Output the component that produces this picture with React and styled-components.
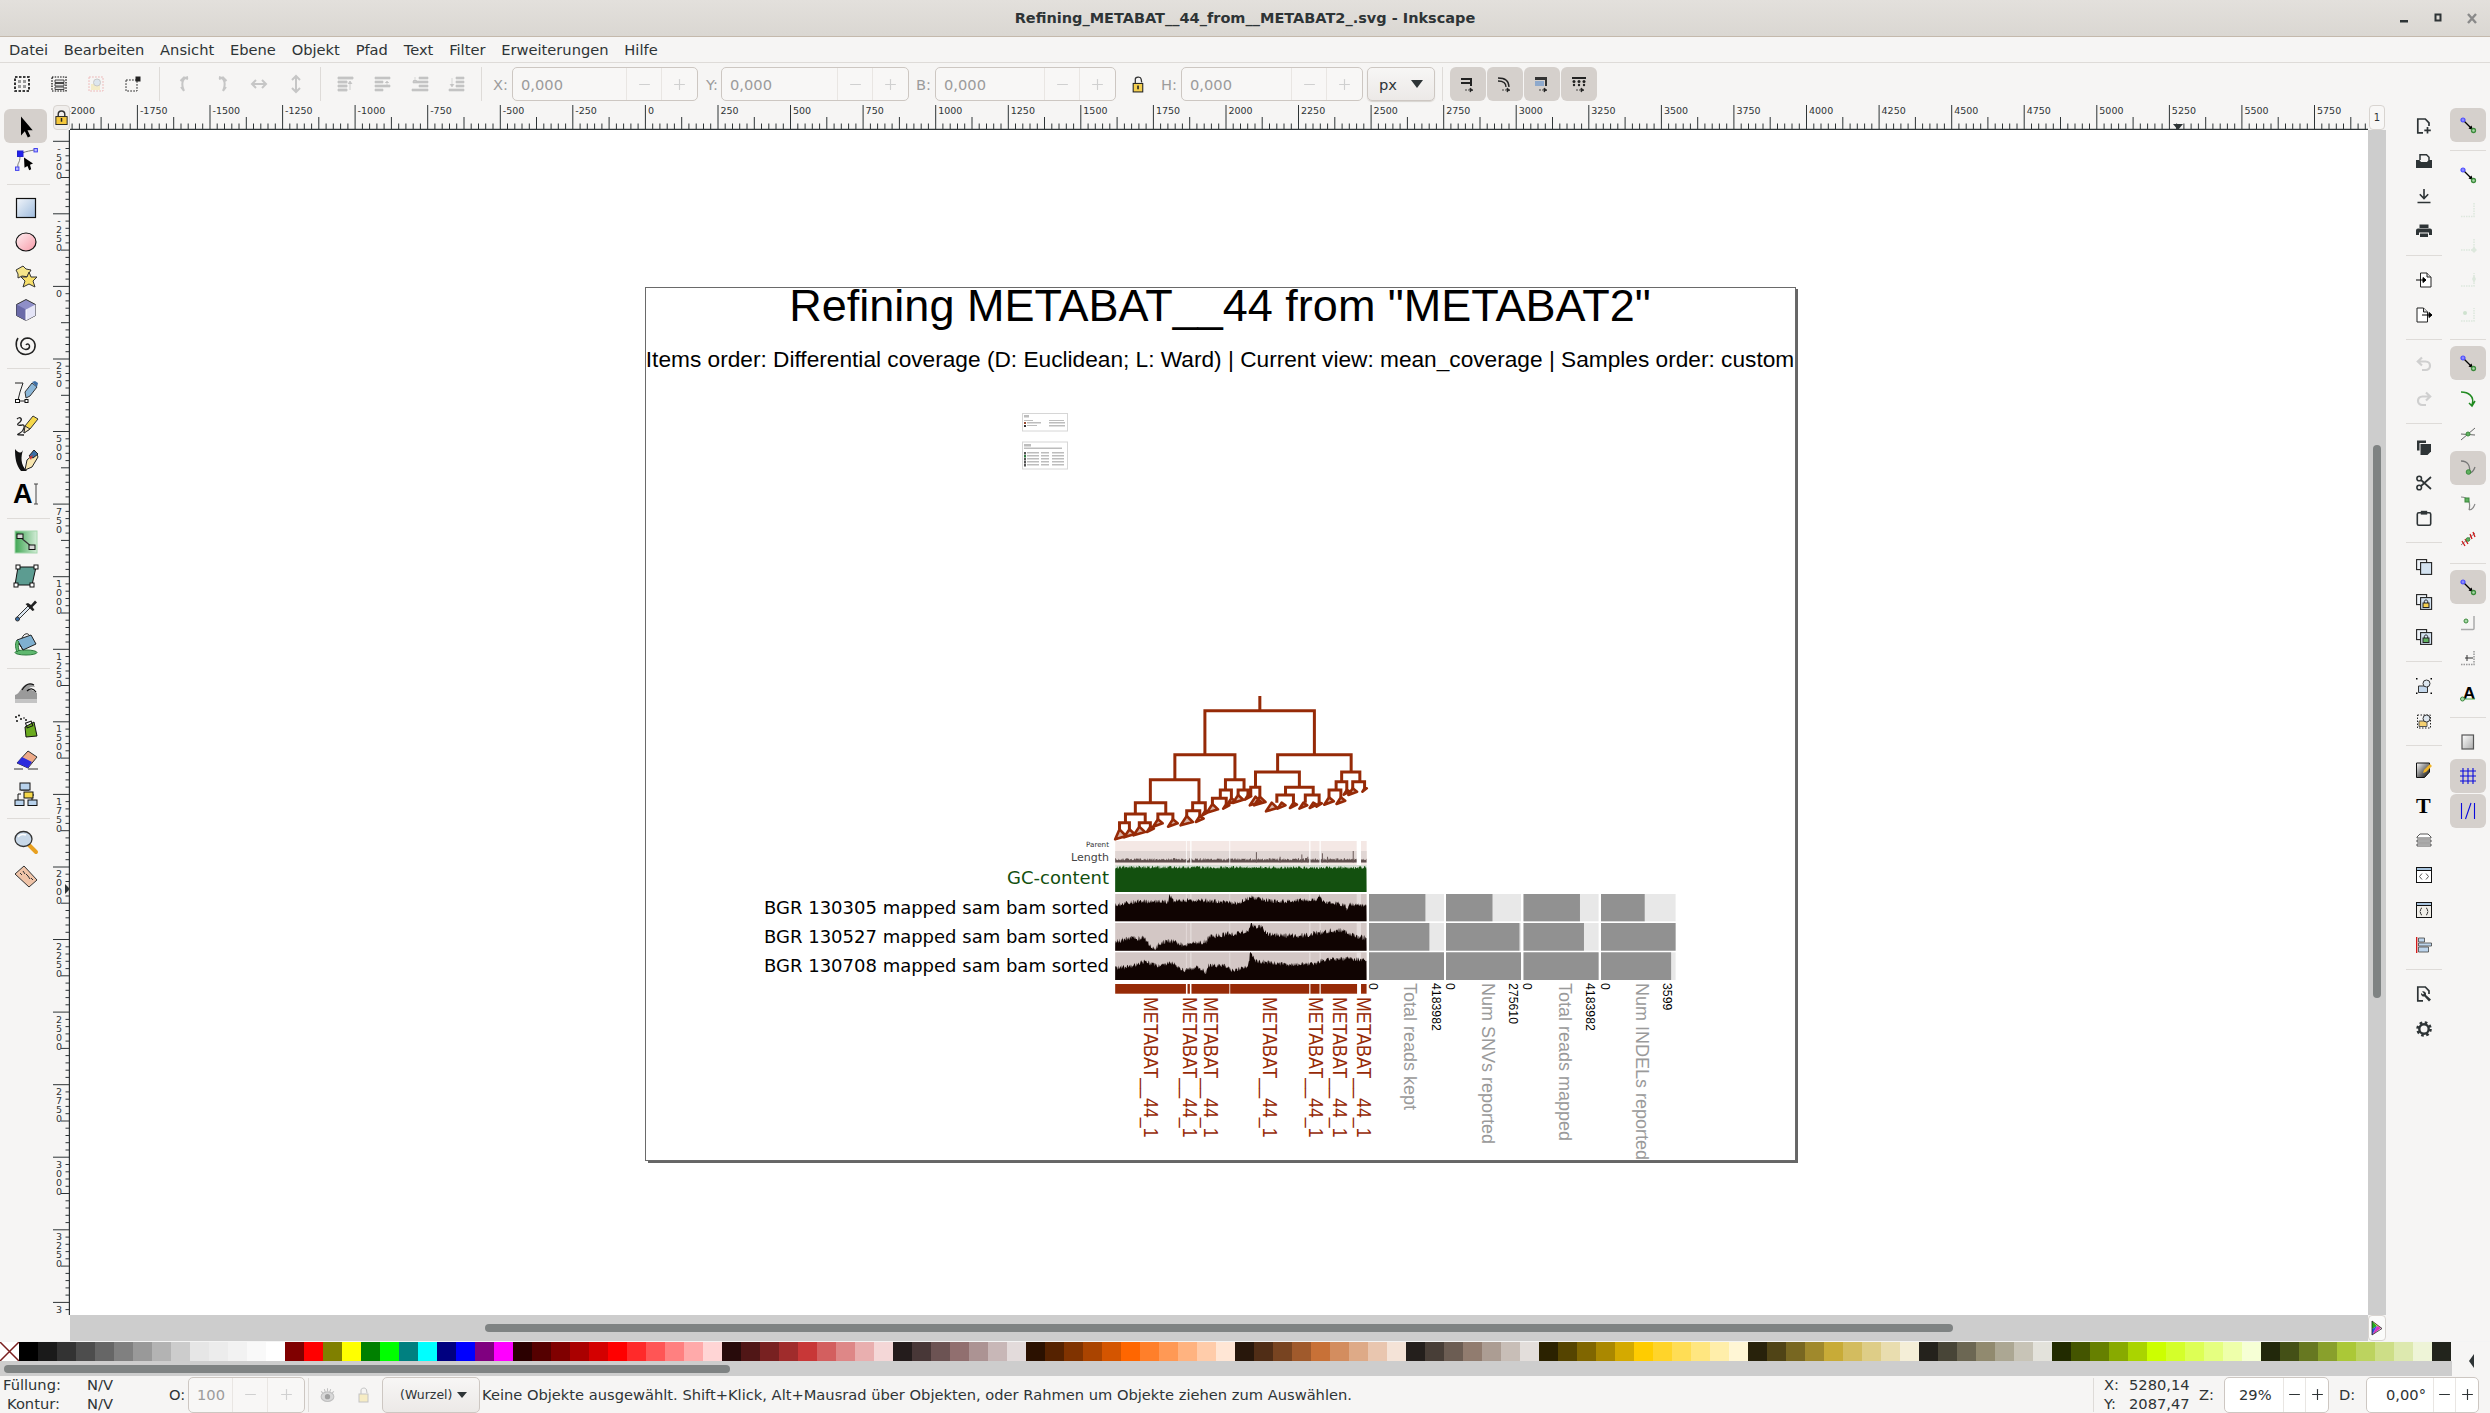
import React from 'react';
import styled, { createGlobalStyle } from 'styled-components';
import { Minus, Plus } from 'lucide-react';

const UI_FONT = '"DejaVu Sans", sans-serif';
const BG = '#f6f5f4';
const DARK = '#2e3436';
const RUST = '#962a07';
const STEP = 72.57;
const ZERO_X = 645.4;
const ZERO_Y = 286.4;

const GlobalStyle = createGlobalStyle`
  html, body { margin: 0; padding: 0; background: ${BG}; }
  body { font-family: ${UI_FONT}; color: ${DARK}; overflow: hidden; }
`;

const Window = styled.div`
  width: 2490px;
  height: 1413px;
  display: flex;
  flex-direction: column;
  background: ${BG};
  font-size: 14.67px;
`;

const TitleBar = styled.header`
  height: 36px;
  flex: none;
  position: relative;
  display: flex;
  align-items: center;
  justify-content: center;
  background: linear-gradient(#e3e0dc, #dad7d2);
  border-bottom: 1px solid #c4b9ac;
  font-weight: bold;
  font-size: 14.5px;
`;

const WinButtons = styled.div`
  position: absolute;
  right: 10px;
  top: 0;
  height: 36px;
`;

const MenuBar = styled.nav`
  height: 25px;
  flex: none;
  display: flex;
  align-items: center;
  padding-left: 1px;
  border-bottom: 1px solid #dedbd8;
`;

const MenuItem = styled.span`
  padding: 0 7.9px;
  white-space: nowrap;
`;

const Toolbar = styled.div`
  height: 42px;
  flex: none;
  display: flex;
  align-items: center;
  padding: 0 0 0 3px;
`;

const Slot = styled.div`
  width: ${p => p.$w || 37}px;
  height: 34px;
  flex: none;
  display: flex;
  align-items: center;
  justify-content: center;
  margin-right: ${p => p.$mr || 0}px;
  ${p => p.$on && `background: #d5d0cc; border-radius: 6px;`}
`;

const VRule = styled.div`
  width: 1px;
  height: 34px;
  flex: none;
  background: #dedbd8;
  margin: 0 ${p => p.$r ?? 6}px 0 ${p => p.$l ?? 6}px;
`;

const FieldLabel = styled.span`
  flex: none;
  width: ${p => p.$w}px;
  margin-left: ${p => p.$ml || 0}px;
  color: ${p => (p.$off ? '#9c9c9c' : DARK)};
  white-space: nowrap;
`;

const Spin = styled.div`
  display: flex;
  flex: none;
  width: ${p => p.$w}px;
  height: ${p => p.$h || 34}px;
  box-sizing: border-box;
  border: 1px solid #cdc7c2;
  border-radius: 5px;
  background: ${p => (p.$off ? '#f8f7f6' : '#ffffff')};
  color: ${p => (p.$off ? '#9c9c9c' : DARK)};
  margin-right: ${p => p.$mr || 0}px;
`;

const SpinValue = styled.div`
  flex: 1;
  display: flex;
  align-items: center;
  padding-left: ${p => p.$pad}px;
`;

const SpinStep = styled.div`
  flex: none;
  width: ${p => p.$w}px;
  display: flex;
  align-items: center;
  justify-content: center;
  border-left: 1px solid #e9e6e3;
  color: ${p => (p.$off ? '#d0d0d0' : DARK)};
`;

const UnitButton = styled.div`
  width: 68px;
  height: 34px;
  flex: none;
  box-sizing: border-box;
  border: 1px solid #cdc7c2;
  border-radius: 5px;
  background: linear-gradient(#f7f6f5, #ece9e7);
  box-shadow: 0 1px 1px #d8d4d0;
  display: flex;
  align-items: center;
  justify-content: space-between;
  padding: 0 11px;
  margin: 0 7px 0 4px;
`;

const Caret = styled.span`
  width: 0;
  height: 0;
  border-left: 6px solid transparent;
  border-right: 6px solid transparent;
  border-top: 8px solid ${DARK};
`;

const SmallCaret = styled(Caret)`
  border-left-width: 5px;
  border-right-width: 5px;
  border-top-width: 6px;
`;

const Workspace = styled.div`
  flex: 1;
  display: flex;
  min-height: 0;
`;

const ToolColumn = styled.aside`
  width: 52px;
  flex: none;
  padding: 4px 0 0 4px;
  box-sizing: border-box;
`;

const ToolButton = styled.div`
  width: 43px;
  height: 34px;
  display: flex;
  align-items: center;
  justify-content: center;
  ${p => p.$on && `background: #d5d0cc; border-radius: 6px;`}
`;

const ToolGap = styled.div`
  height: 14px;
  display: flex;
  align-items: center;
  &::before {
    content: '';
    width: 43px;
    height: 1px;
    margin: 0 auto;
    background: #dedbd8;
  }
`;

const CanvasGrid = styled.div`
  width: 2334px;
  flex: none;
  display: grid;
  grid-template-columns: 18px 2298px 18px;
  grid-template-rows: 25px 1185px 26px;
`;

const RulerLock = styled.div`
  margin: 0 0 0 1px;
  border: 1px solid #d8d4d0;
  border-radius: 4px;
  background: #f0eeec;
  box-sizing: border-box;
  display: flex;
  align-items: center;
  justify-content: center;
  z-index: 2;
`;

const PageCounter = styled(RulerLock)`
  margin: 0 1px;
  background: #f8f7f6;
  font-size: 10px;
  &::after {
    content: '1';
  }
`;

const RulerSvg = styled.svg`
  display: block;
`;

const RulerLabel = styled.text`
  font-family: ${UI_FONT};
  font-size: 9.5px;
  fill: ${DARK};
`;

const Canvas = styled.main`
  background: #ffffff;
  overflow: hidden;
`;

const VScroll = styled.div`
  background: #cdcdcd;
  padding: 315px 0 0 5px;
`;

const VThumb = styled.div`
  width: 8px;
  height: 553px;
  border-radius: 4px;
  background: #7f8383;
`;

const HScroll = styled.div`
  background: #cdcdcd;
  padding: 9px 0 0 415px;
`;

const HThumb = styled.div`
  width: ${p => p.$w}px;
  height: 8px;
  border-radius: 4px;
  background: #7f8383;
`;

const WheelButton = styled.div`
  border: 1px solid #d8d4d0;
  border-radius: 4px;
  background: #fbfbfa;
  box-sizing: border-box;
  display: flex;
  align-items: center;
  justify-content: center;
`;

const SideColumns = styled.div`
  display: flex;
  flex: 1;
  padding: 3px 0 0 16px;
  box-sizing: border-box;
`;

const SideColumn = styled.div`
  width: 44px;
  flex: none;
  display: flex;
  flex-direction: column;
  align-items: center;
`;

const SideButton = styled.div`
  width: 36px;
  height: 35px;
  display: flex;
  align-items: center;
  justify-content: center;
  ${p => p.$on && `background: #d5d0cc; border-radius: 6px; height: 34px; margin-bottom: 1px;`}
`;

const SideGap = styled.div`
  height: 14px;
  width: 36px;
  display: flex;
  align-items: center;
  &::before {
    content: '';
    width: 100%;
    height: 1px;
    background: #dedbd8;
  }
`;

const PaletteArea = styled.section`
  flex: none;
  height: 34px;
  display: flex;
  border-top: 1px solid #f4f4f4;
`;

const PaletteBody = styled.div`
  width: 2452px;
  flex: none;
  display: flex;
  flex-direction: column;
`;

const Swatches = styled.div`
  height: 19px;
  display: flex;
`;

const Swatch = styled.div`
  flex: 1;
  background: ${p => p.$c};
`;

const NoColor = styled.svg`
  flex: 1;
  display: block;
  background: #ffffff;
`;

const PaletteScroll = styled.div`
  flex: 1;
  background: #cdcdcd;
  padding: 4px 0 0 4px;
`;

const PaletteArrow = styled.div`
  flex: 1;
  display: flex;
  justify-content: center;
  padding-top: 12px;
  &::before {
    content: '';
    width: 0;
    height: 0;
    border-top: 7px solid transparent;
    border-bottom: 7px solid transparent;
    border-right: 5px solid ${DARK};
  }
`;

const StatusBar = styled.footer`
  height: 37px;
  flex: none;
  display: flex;
  align-items: center;
  white-space: nowrap;
`;

const StyleReadout = styled.div`
  width: 169px;
  flex: none;
  display: grid;
  grid-template-columns: 84px 1fr;
  grid-auto-rows: 19px;
  padding: 1px 0 0 3px;
  box-sizing: border-box;
`;

const Indented = styled.span`
  padding-left: 4px;
`;

const LayerButton = styled.div`
  width: 98px;
  height: 36px;
  flex: none;
  box-sizing: border-box;
  border: 1px solid #cdc7c2;
  border-radius: 5px;
  background: linear-gradient(#f7f6f5, #ece9e7);
  display: flex;
  align-items: center;
  gap: 5px;
  padding-left: 17px;
  font-size: 12.5px;
`;

const StatusMessage = styled.span`
  margin-left: 2px;
  flex: none;
  width: 1611px;
`;

const Coords = styled.div`
  width: 105px;
  flex: none;
  display: grid;
  grid-template-columns: 25px 1fr;
  grid-auto-rows: 19px;
  padding: 1px 0 0 10px;
  box-sizing: border-box;
`;

const StatusIconSlot = styled.div`
  width: ${p => p.$w}px;
  flex: none;
  display: flex;
  justify-content: center;
`;

const ChartText = styled.text`
  font-family: ${p => (p.$ui ? UI_FONT : '"Liberation Sans", sans-serif')};
  font-size: ${p => p.$size}px;
  fill: ${p => p.$fill || '#000000'};
`;

const IconText = styled.text`
  font-family: ${p => (p.$serif ? '"Liberation Serif", serif' : '"Liberation Sans", sans-serif')};
  font-weight: bold;
  font-size: ${p => p.$size}px;
  fill: #000000;
`;

// ---- icons, all on a 24 or a 16 grid ----
const ln = (id, a, b) => (
  <linearGradient id={id} x1="0" y1="0" x2="1" y2="1">
    <stop offset="0" stopColor={a} />
    <stop offset="1" stopColor={b} />
  </linearGradient>
);

const dotL = '#dde8dd';
const GREEN = '#3c8a3c';
const SNAP_BLUE = '#4a4aff';

const SnapBase = () => (
  <>
    <path d="M4 4l8 8" stroke="#000" strokeWidth="1.2" />
    <path d="M13 13l-4.5-1.5 3-3z" fill="#000" />
    <circle cx="3" cy="3" r="2" fill="#8888ff" stroke={SNAP_BLUE} strokeWidth="1.2" />
    <circle cx="13.5" cy="13.5" r="2" fill="#a8d8a8" stroke={GREEN} strokeWidth="1.3" />
  </>
);

const Dup = ({ children }) => (
  <>
    <rect x="0.6" y="0.6" width="10" height="10" fill="#eef3f8" stroke="#222" strokeWidth="1.1" />
    <rect x="4.6" y="3.6" width="11" height="11.8" fill="#d3e2f0" stroke="#222" strokeWidth="1.1" />
    {children}
  </>
);

const ICONS = {
  select: [24, <path d="M7 2.5v19l3.8-4.2 3 6.2 2.6-1.3-2.9-5.9h5.2z" fill="#000" />],
  node: [24, <>
    <path d="M6 8C6 16 3 14 4 20M8 5C13 3 16 3 20 2" fill="none" stroke="#777" strokeWidth="1" />
    <rect x="3.5" y="3" width="5.5" height="5.5" fill="#2222ee" stroke="#2222cc" />
    <rect x="20" y="0.5" width="3.4" height="3.4" fill="#bbbbff" stroke="#4444ee" />
    <rect x="1.5" y="19" width="3.4" height="3.4" fill="#bbbbff" stroke="#4444ee" />
    <path d="M10 9.5l9 6-3 1.3 1.2 4.5-2 .9-1.7-4.2-3 1.8z" fill="#000" />
  </>],
  rect: [24, <>
    <defs>{ln('gRect', '#f2f6fb', '#9ebbdd')}</defs>
    <rect x="2.5" y="2.5" width="19" height="19" fill="url(#gRect)" stroke="#111" strokeWidth="1.2" />
  </>],
  ellipse: [24, <>
    <defs>{ln('gEll', '#fff0f2', '#f79aa8')}</defs>
    <ellipse cx="12" cy="12" rx="10" ry="9" fill="url(#gEll)" stroke="#111" strokeWidth="1.2" />
  </>],
  star: [24, <>
    <path d="M2 6l7-4 3 3 5 1-3 5 1 2-7-1-4 2 0-4z" fill="#f5e58a" stroke="#333" />
    <path d="M15 8l2 5 6 0-4 4 2 6-6-3-6 3 2-6-4-4 6 0z" fill="#f7df6a" stroke="#333" />
  </>],
  box: [24, <>
    <path d="M12 1.5l9.5 5v11l-9.5 5-9.5-5v-11z" fill="#8f8fc8" stroke="#333" />
    <path d="M2.5 6.5L12 11.5v11l-9.5-5z" fill="#6a6aa8" />
    <path d="M12 11.5l9.5-5v11L12 22.5z" fill="#e4e4f6" />
    <path d="M12 11.5v11" stroke="#fff" />
  </>],
  spiral: [24, <path d="M12 13c1-2 4-1 3.500 2-.8 3-6 3.500-8 0-2-4 1-9 6-9 6 .3 9 6 7 11-2 5-9 7-14 4C2 18 .8 11 4 6" fill="none" stroke="#222" strokeWidth="1.5" />],
  bezier: [24, <>
    <path d="M1 3h8l-3 9-2 8M5 21h7" fill="none" stroke="#222" strokeWidth="1" />
    <rect x="1.500" y="19.5" width="4" height="3" fill="#fff" stroke="#111" />
    <rect x="11" y="19.500" width="3" height="3" fill="#fff" stroke="#111" />
    <path d="M12 18l-1-6 7-9 5 4-7 9z" fill="#8cb7d8" stroke="#333" />
    <path d="M18 2l3-1 3 2-1 4z" fill="#3c6ea5" />
  </>],
  pencil: [24, <>
    <path d="M3 5c3-3 6 0 3 3-3 2-4 4 2 3 4-1 2 6-2 8s-3 2 4 2" fill="none" stroke="#222" strokeWidth="1.300" />
    <path d="M10 19l1-7 8-10 5 3-8 10z" fill="#f6d84a" stroke="#333" />
    <path d="M10 19l1-7 5 3z" fill="#f4e6c4" stroke="#333" />
  </>],
  pen: [24, <>
    <path d="M1 1c0 9 1 16 6 22h6C6 17 7 8 9 2 7 6 4 5 1 1z" fill="#111" />
    <path d="M11 22l2-10 9-8 2 5-6 10z" fill="#f8e6b0" stroke="#222" />
    <path d="M15 8l5-6 4 4-5 4z" fill="#3c6ea5" stroke="#222" />
    <path d="M15 9l4-2-2 5z" fill="#c83737" />
  </>],
  text: [24, <>
    <IconText x="-1" y="21" $size="27">A</IconText>
    <path d="M20 2h4M22 2v20M20 22h4" stroke="#444" strokeWidth="1" fill="none" />
  </>],
  gradient: [24, <>
    <defs><linearGradient id="gGrad" x1="0" x2="1" y1="0" y2="0"><stop offset="0" stopColor="#3fa653" /><stop offset="1" stopColor="#d3ecd7" /></linearGradient></defs>
    <rect x="1" y="1" width="22" height="22" fill="url(#gGrad)" stroke="#a6d8ae" />
    <path d="M6 7l12 10" stroke="#333" strokeWidth="1.2" />
    <rect x="3" y="4" width="6" height="4.500" fill="#d8d8d8" stroke="#111" />
    <rect x="15" y="15" width="6" height="4.500" fill="#d8d8d8" stroke="#111" />
  </>],
  mesh: [24, <>
    <path d="M4 3h18l-4 18H1z" fill="#5c9c91" />
    <path d="M4 3h18l-4 18H1z" fill="none" stroke="#111" strokeWidth="1" />
    <rect x="2" y="1" width="4" height="4" fill="#fff" stroke="#111" />
    <rect x="20" y="1" width="4" height="4" fill="#fff" stroke="#111" />
    <rect x="0" y="19" width="4" height="4" fill="#fff" stroke="#111" />
    <rect x="16" y="19" width="4" height="4" fill="#fff" stroke="#111" />
  </>],
  dropper: [24, <>
    <path d="M3 19L14 8l2 2L5 21z" fill="#dbe6f0" stroke="#333" />
    <circle cx="3.500" cy="21" r="2" fill="#3c6ea5" stroke="#333" />
    <path d="M14 5l3 2 4-4.500 2 2L18.500 9l2 3-2 1-7-7z" fill="#222" />
  </>],
  bucket: [24, <>
    <ellipse cx="12" cy="20.500" rx="11" ry="2.500" fill="#5fb86f" stroke="#2d7a3d" />
    <path d="M3 8l14-5 5 9-13 6z" fill="#7fb0d0" stroke="#222" />
    <path d="M3 8l6 10" stroke="#222" />
    <path d="M3 8c-2 3-2 7 0 12l2-2c-1-3-1-6 0-8z" fill="#5fb86f" stroke="#2d7a3d" />
    <path d="M8 6c2-5 6-5 7-3" fill="none" stroke="#222" />
  </>],
  tweak: [24, <>
    <path d="M1 23v-8c5-1 6-9 12-11 4-1 7 0 8 3-3-1-6 0-7 3 3-1 6 1 9 3v10z" fill="#9a9a9a" />
    <path d="M8 10c3-5 7-8 12-5M13 11c3-3 6-3 9 1" fill="none" stroke="#111" strokeWidth="1.2" />
    <rect x="1" y="19" width="22" height="4" fill="#c4c4c4" />
  </>],
  spray: [24, <>
    <path d="M11 13l9-5 3 14-11 1z" fill="#6aaa1e" stroke="#111" />
    <rect x="12" y="8" width="6" height="5" fill="none" stroke="#111" transform="rotate(-20 15 10)" />
    <g fill="#111">
      <circle cx="2" cy="3" r="1" /><circle cx="5" cy="1.500" r="1" /><circle cx="7" cy="5" r="1" />
      <circle cx="3" cy="7" r="1" /><circle cx="10" cy="4" r=".8" /><circle cx="12" cy="6" r="1" />
    </g>
  </>],
  eraser: [24, <>
    <path d="M3 15L14 3l9 6-9 11z" fill="#eeaa88" stroke="#333" />
    <path d="M3 15l5-6 10 5-4 6z" fill="#2b2bdd" />
    <path d="M0 21h9M14 21h10" stroke="#333" strokeWidth="1" />
  </>],
  connector: [24, <>
    <path d="M7 12H4v7M7 8h8M18 14v5M11 13h9" stroke="#111" fill="none" />
    <rect x="6" y="1" width="10" height="7" fill="#b8d2ec" stroke="#111" />
    <rect x="10" y="10" width="9" height="6" fill="#f6d84a" stroke="#111" />
    <rect x="1" y="18" width="9" height="5.500" fill="#b8d2ec" stroke="#111" />
    <rect x="14" y="18" width="9" height="5.500" fill="#b8d2ec" stroke="#111" />
  </>],
  zoom: [24, <>
    <path d="M14 14l8 8" stroke="#e8a020" strokeWidth="4" strokeLinecap="round" />
    <ellipse cx="9.500" cy="9" rx="8.500" ry="7.500" fill="#c8d8e8" stroke="#333" strokeWidth="1.3" />
    <path d="M4 7c2-3 6-3 8-2" stroke="#fff" strokeWidth="1.500" fill="none" />
  </>],
  measure: [24, <>
    <path d="M1 10L10 2l13 14-8 7z" fill="#f0c4a8" stroke="#333" />
    <path d="M6 9l2 2M9 7l2 3M12 10l2 2M14 12l2 3M17 14l2 2" stroke="#333" fill="none" />
  </>],

  selAll: [16, <>
    <rect x="1" y="1" width="14" height="14" fill="none" stroke="#000" strokeWidth="1.6" strokeDasharray="2.500 1.500" />
    <path d="M4 4h3v3H4zM9 4h3v3H9zM4 9h3v3H4zM9 9h3v3H9z" fill="#9a9a9a" />
  </>],
  selLayers: [16, <>
    <rect x="1" y="1" width="14" height="14" fill="none" stroke="#000" strokeWidth="1.2" strokeDasharray="1.500 1.200" />
    <path d="M4 4h9v2.500H4zM4 7.500h9V10H4zM4 11h9v2.500H4z" fill="#e8e8e8" stroke="#333" strokeWidth=".9" />
  </>],
  deselect: [16, <>
    <rect x="1" y="1" width="14" height="14" fill="none" stroke="#edb8b8" strokeWidth="1" strokeDasharray="1.800 1.200" />
    <rect x="3" y="8" width="9" height="6" fill="#f4ecc8" />
    <circle cx="9" cy="6.500" r="3.500" fill="#dde6ee" stroke="#c8c8c8" />
  </>],
  touch: [16, <>
    <rect x="1" y="4" width="11" height="11" fill="none" stroke="#333" strokeWidth="1" strokeDasharray="1.800 1.200" />
    <rect x="10.500" y="0.500" width="5" height="5" fill="#222" />
  </>],
  rotL: [16, <path d="M11 1C5 2 4 8 7 15M3.500 5L7 1.500l4 1.500M7 15l-3-4" fill="none" stroke="#c6c6c6" strokeWidth="2" />],
  rotR: [16, <path d="M5 1c6 1 7 7 4 14M12.500 5L9 1.500 5 3M9 15l3-4" fill="none" stroke="#c6c6c6" strokeWidth="2" />],
  flipH: [16, <path d="M1 8h14M5 4L1 8l4 4M11 4l4 4-4 4" fill="none" stroke="#c6c6c6" strokeWidth="2" />],
  flipV: [16, <path d="M8 0v16M4 4l4-4 4 4M4 12l4 4 4-4" fill="none" stroke="#c6c6c6" strokeWidth="2" />],
  raiseTop: [16, <path d="M0 1h15v2H0zM0 5h9v2H0zM0 9h9v2H0zM0 13h9v2H0zM12 14V6M10 8l2-3 2 3" fill="#c4c4c4" stroke="#c4c4c4" strokeWidth=".8" />],
  raise: [16, <path d="M0 1h15v2H0zM0 5h8v2H0zM0 9h15v2H0zM0 13h8v2H0zM12 9V6M10 7l2-2 2 2" fill="#c4c4c4" stroke="#c4c4c4" strokeWidth=".6" />],
  lower: [16, <path d="M7 1h9v2H7zM1 5h15v2H1zM7 9h9v2H7zM0 13h16v2H0zM3 1v4M1 4l2 2 2-2" fill="#c4c4c4" stroke="#c4c4c4" strokeWidth=".6" />],
  lowerBot: [16, <path d="M7 1h8v2H7zM7 5h8v2H7zM7 9h8v2H7zM0 13h15v2H0zM3 2v8M1 8l2 3 2-3" fill="#c4c4c4" stroke="#c4c4c4" strokeWidth=".6" />],
  lockOpen: [16, <>
    <path d="M5 7V3c0-2 5-3 5.500 0L11 6" fill="none" stroke="#333" strokeWidth="1.2" />
    <rect x="3" y="7" width="9" height="8" fill="#f5d050" stroke="#222" />
    <rect x="6.800" y="9" width="1.500" height="3.500" fill="#222" />
  </>],
  lockYellow: [16, <>
    <path d="M4.500 7V4.500a3.500 3.500 0 0 1 7 0V7" fill="none" stroke="#333" strokeWidth="1.500" />
    <rect x="2" y="7" width="12" height="8.500" fill="#f5c83c" stroke="#222" />
    <rect x="7.200" y="8.500" width="1.600" height="4" fill="#222" />
  </>],
  dropA: [16, <>
    <path d="M1 2h10v2H1zM1 6h10v2H1z" fill="#222" /><path d="M10 2h2v8h-2z" fill="#222" />
    <path d="M5 14h6M10 12l3 2-3 2z" stroke="#222" fill="#222" strokeWidth=".8" strokeDasharray="2 1" />
  </>],
  dropB: [16, <>
    <path d="M1 2c6 0 11 2 11 9M1 5c5 0 8 2 8 6" fill="none" stroke="#222" strokeWidth="1.300" />
    <path d="M5 14h6M10 12l3 2-3 2z" stroke="#222" fill="#222" strokeWidth=".8" strokeDasharray="2 1" />
  </>],
  dropC: [16, <>
    <path d="M1 1h12v9h-2V4H1z" fill="#333" /><path d="M1 5h9v5H1z" fill="#8ea9cc" />
    <path d="M5 14h6M10 12l3 2-3 2z" stroke="#222" fill="#222" strokeWidth=".8" strokeDasharray="2 1" />
  </>],
  dropD: [16, <>
    <path d="M1 1h14v2H1z" fill="#222" />
    <g fill="#222"><circle cx="3" cy="5.500" r="1.500" /><circle cx="8" cy="5.500" r="1.500" /><circle cx="13" cy="5.500" r="1.500" /><circle cx="3" cy="9" r="1.200" /><circle cx="8" cy="9" r="1.200" /><circle cx="13" cy="9" r="1.200" /></g>
    <path d="M5 14h6M10 12l3 2-3 2z" stroke="#222" fill="#222" strokeWidth=".8" strokeDasharray="2 1" />
  </>],

  docNew: [16, <path d="M7 14.800H1.800V1h7.500L13 4.800V8M11.500 9v6.500M8.300 12.300h6.500" fill="none" stroke={DARK} strokeWidth="1.700" />],
  open: [16, <>
    <path d="M4 7V1.800h6.500L13 4.200V7" fill="none" stroke={DARK} strokeWidth="1.500" />
    <path d="M0 7h3.500l1.500 2h6l1.500-2H16v8H0z" fill={DARK} />
  </>],
  save: [16, <path d="M8 1v9M3.800 6.200L8 10.500l4.200-4.300M1.500 14.500h13" fill="none" stroke={DARK} strokeWidth="1.600" />],
  print: [16, <>
    <path d="M3.500 1.500h9V5h-9z" fill={DARK} />
    <path d="M2 5.500h12a2 2 0 0 1 2 2V12h-3V9.500H3V12H0V7.500a2 2 0 0 1 2-2z" fill={DARK} />
    <path d="M4 10.500h8V14H4z" fill={DARK} />
  </>],
  importDoc: [16, <>
    <path d="M4.500 1H11l4 4v10H4.500z" fill="#fff" stroke="#222" />
    <path d="M11 1v4h4" fill="#ddd" stroke="#222" />
    <path d="M0 8h9M7 5.500L10 8l-3 2.500z" stroke="#000" fill="#000" />
  </>],
  exportDoc: [16, <>
    <path d="M1 1h6.500l4 4v10H1z" fill="#fff" stroke="#222" />
    <path d="M7.500 1v4h4" fill="#ddd" stroke="#222" />
    <path d="M6 8h9M13 5.500L16 8l-3 2.500z" stroke="#000" fill="#000" />
  </>],
  undo: [16, <path d="M6 1.500L1.800 5.500 6 9.500M2 5.500h7.500c6 0 6 8.500 0 8.500H6" fill="none" stroke="#cfcfcf" strokeWidth="2.200" />],
  redo: [16, <path d="M10 1.500l4.200 4L10 9.500M14 5.500H6.500c-6 0-6 8.500 0 8.500H10" fill="none" stroke="#cfcfcf" strokeWidth="2.200" />],
  copy: [16, <>
    <path d="M1 .5h9V3H3.500v7.500H1z" fill={DARK} />
    <path d="M4.500 4H15v7.500L11.500 15h-7z" fill={DARK} />
  </>],
  cut: [16, <>
    <circle cx="3.200" cy="3.500" r="2.300" fill="none" stroke={DARK} strokeWidth="1.600" />
    <circle cx="3.200" cy="12.500" r="2.300" fill="none" stroke={DARK} strokeWidth="1.600" />
    <path d="M5 5l10 9M5 11L15 2" stroke={DARK} strokeWidth="1.700" />
  </>],
  paste: [16, <>
    <rect x="1.300" y="2.800" width="13.400" height="12.400" rx="1.500" fill="none" stroke={DARK} strokeWidth="1.600" />
    <rect x="4.800" y=".8" width="6.400" height="3.800" fill={DARK} />
  </>],
  dup: [16, <Dup />],
  clone: [16, <Dup><rect x="7" y="9" width="6" height="4.500" fill="#f5d050" stroke="#222" /><path d="M8.300 9V7.500c0-2 3.400-2 3.400 0V9" fill="none" stroke="#222" /></Dup>],
  unlink: [16, <Dup><rect x="7" y="9" width="6" height="4.500" fill="#5fb05f" stroke="#222" /><path d="M8.300 9V7.500c0-2 3.400-2 3.400 0V9" fill="none" stroke="#222" /></Dup>],
  zoomSel: [16, <>
    <path d="M2.500 8h9v6.500h-9z" fill="#c4d8ec" stroke="#333" />
    <circle cx="10.500" cy="5.500" r="3.500" fill="#dde6ee" stroke="#333" />
    <path d="M0 0h1.500v1.500H0zM14.500 0H16v1.500h-1.500zM0 14.500h1.500V16H0zM14.500 14.500H16V16h-1.500z" fill="#000" />
  </>],
  zoomDraw: [16, <>
    <path d="M1.500 2h13v13h-13z" fill="none" stroke="#222" strokeDasharray="1.500 1.500" />
    <path d="M3 8h8v5.500H3z" fill="#f5d070" stroke="#555" />
    <circle cx="10.500" cy="5.500" r="3.500" fill="#dde6ee" stroke="#333" />
  </>],
  fillStroke: [16, <>
    <defs>{ln('gFill', '#fff', '#000')}</defs>
    <path d="M.5 1h13v9l-5 5.500H.5z" fill="url(#gFill)" stroke="#111" />
    <path d="M7 11l1-3 6-6 2 2-6 6z" fill="#f0b428" />
  </>],
  textDlg: [16, <IconText x="0" y="15.500" $size="22" $serif>T</IconText>],
  layers: [16, <path d="M1 5l3-3h8l3 3v1H1zM1 8h14v2H1zM1 12h14v2H1z" fill="#fff" stroke="#444" strokeWidth=".9" />],
  xml: [16, <>
    <rect x=".5" y=".5" width="15" height="15" fill="#fff" stroke="#111" />
    <rect x=".5" y=".5" width="15" height="3" fill="#a8c4de" stroke="#111" />
    <path d="M6 6.500L3.500 9.500 6 12.500M10 6.500l2.500 3-2.500 3" fill="none" stroke="#555" />
  </>],
  css: [16, <>
    <rect x=".5" y=".5" width="15" height="15" fill="#f0eee8" stroke="#111" />
    <rect x=".5" y=".5" width="15" height="3" fill="#a8c4de" stroke="#111" />
    <path d="M6 6C4 6 5 9.500 3.800 9.500 5 9.500 4 13 6 13M10 6c2 0 1 3.500 2.200 3.500-1.200 0-.2 3.500-2.200 3.500" fill="none" stroke="#333" />
  </>],
  align: [16, <>
    <path d="M.7 0v16" stroke="#d01010" strokeWidth="1.300" />
    <path d="M2.500 1h6v4h-6zM2.500 6h13v3h-13zM2.500 10h10v5h-10z" fill="#bcd4ec" stroke="#444" strokeWidth=".8" />
  </>],
  docProps: [16, <>
    <path d="M7 14.800H1.800V1h7.500L13 4.800V8" fill="none" stroke={DARK} strokeWidth="1.700" />
    <path d="M6 5.500a3 3 0 0 1 4 3.500l5 4.500-2 2-4.500-5A3 3 0 0 1 5 7l2 1.500 1-1z" fill={DARK} />
  </>],
  prefs: [16, <>
    <circle cx="8" cy="8" r="4.700" fill="none" stroke={DARK} strokeWidth="2.400" />
    <circle cx="8" cy="8" r="6.500" fill="none" stroke={DARK} strokeWidth="2.600" strokeDasharray="2.600 2.500" />
  </>],

  snap: [16, <SnapBase />],
  snapBBox: [16, <path d="M1 14.500h13V1" fill="none" stroke={dotL} strokeWidth="1.500" strokeDasharray="1.500 1" />],
  snapEdge: [16, <><path d="M1 13h13V1" fill="none" stroke={dotL} strokeWidth="1.500" strokeDasharray="1.500 1" /><path d="M14 10l3 3-3 3-3-3z" fill={dotL} /></>],
  snapCorner: [16, <><path d="M1 14h13V1" fill="none" stroke={dotL} strokeWidth="1.500" strokeDasharray="1.500 1" /><path d="M14 3l2 4-2 4-2-4z" fill={dotL} /></>],
  snapMid: [16, <><path d="M1 14h13V1" fill="none" stroke={dotL} strokeWidth="1.500" strokeDasharray="1.500 1" /><circle cx="5" cy="6" r="2" fill="#cfe2cf" /></>],
  snapPath: [16, <path d="M1 1c7 0 14 4 11 13M9 12l3 3 3-5" fill="none" stroke="#1f8a1f" strokeWidth="1.500" />],
  snapX: [16, <><path d="M1 14L15 2M1 8l14 1" stroke="#666" strokeWidth="1" /><circle cx="8" cy="8" r="2" fill="#5fb05f" stroke={GREEN} /></>],
  snapSmooth: [16, <><path d="M1 1c7 0 10 5 8 13M9 13c3 0 5-3 6-6" fill="none" stroke="#777" strokeWidth="1.300" /><circle cx="8.500" cy="12" r="2.300" fill="#5fb05f" stroke={GREEN} /></>],
  snapMidP: [16, <><path d="M1 1c7 0 10 5 8 13M9 14c3 0 5-3 6-6" fill="none" stroke="#888" strokeWidth="1.200" /><rect x="5" y="2" width="4" height="4" fill="#5fb05f" stroke={GREEN} /></>],
  snapCusp: [16, <><path d="M1 14L15 2" stroke="#888" strokeWidth="1" /><path d="M2 10l3 5M5 8l3 5M10 3l2 5M13 1l2 5" stroke="#d01818" strokeWidth="1.300" /><circle cx="8" cy="8.500" r="1.800" fill="#5fb05f" stroke={GREEN} /></>],
  snapObj: [16, <><path d="M1 14.500h12a1 1 0 0 0 1-1V1" fill="none" stroke="#aaa" strokeWidth="1.500" /><circle cx="6" cy="6" r="2" fill="#a8d8a8" stroke={GREEN} /></>],
  snapCenter: [16, <><path d="M1 14.500h13V1" fill="none" stroke="#999" strokeWidth="1.500" strokeDasharray="1.500 1" /><path d="M5 8h8M7 5v6" stroke="#333" /></>],
  snapText: [16, <><IconText x="3" y="14" $size="17">A</IconText><path d="M2 14h13" stroke="#4caa4c" /><circle cx="2.500" cy="14" r="2" fill="#a8d8a8" stroke={GREEN} /></>],
  snapPage: [16, <>
    <defs>{ln('gPage', '#fff', '#aaa')}</defs>
    <rect x="2" y="1" width="11.500" height="14" fill="url(#gPage)" stroke="#555" strokeWidth="1.200" />
  </>],
  snapGrid: [16, <path d="M0 3h16M0 8h16M0 13h16M3 0v16M8 0v16M13 0v16" stroke="#0b0bdc" strokeWidth="1.100" />],
  snapGuide: [16, <path d="M1.500 0v16M14.500 0v16M5.500 16L11 0" stroke="#0b0bdc" strokeWidth="1.100" />],
  eye: [16, <>
    <ellipse cx="8" cy="10" rx="6" ry="4.500" fill="#d8d8d8" stroke="#c0c0c0" />
    <circle cx="8" cy="10" r="2.500" fill="#a0a0a0" />
    <path d="M2 5l2 2M5 3l1 3M8 2v3M11 3l-1 3M14 5l-2 2" stroke="#c0c0c0" />
  </>],
  lockPale: [16, <>
    <path d="M5 7V3c0-2 5-3 5.500 0L11 6" fill="none" stroke="#c0c0c0" />
    <rect x="3" y="7" width="9" height="8" fill="#f6ecc4" stroke="#c4c4c4" />
  </>],
  wheel: [16, <>
    <path d="M3 1l5 5-5 3z" fill="#22b022" />
    <path d="M3 1l9 7-4-2z" fill="#e8e020" />
    <path d="M3 15l5-9 4 2z" fill="#e030c0" />
    <path d="M3 9l5-3-5 9z" fill="#2a50e0" />
    <path d="M3 1l10 7.500L3 15z" fill="none" stroke="#222" strokeWidth=".8" />
  </>],
};

const IconSvg = styled.svg`
  display: block;
  flex: none;
  width: ${p => p.$size}px;
  height: ${p => p.$size}px;
  overflow: visible;
`;

const Icon = ({ name, size }) => {
  const [vb, art] = ICONS[name];
  return (
    <IconSvg $size={size || vb} viewBox={`0 0 ${vb} ${vb}`}>
      {art}
    </IconSvg>
  );
};

// ---- rulers ----
const Ruler = () => {
  const ticks = [];
  const labels = [];
  for (let i = -90; i <= 240; i++) {
    const x = ZERO_X + (i * STEP) / 10;
    if (x > 2367.5) break;
    const top = i % 10 === 0 ? 105 : i % 5 === 0 ? 117 : 123.5;
    ticks.push(`M${x.toFixed(1)} ${top}V130`);
    if (i % 10 === 0) {
      labels.push(
        <RulerLabel key={i} x={x + 2.5} y={114}>
          {(i / 10) * 250}
        </RulerLabel>
      );
    }
  }
  return (
    <RulerSvg width="2298" height="25" viewBox="70 105 2298 25">
      <path d={ticks.join('')} stroke={DARK} strokeWidth="1" fill="none" />
      <path d="M70 129.500H2368" stroke={DARK} strokeWidth="1.400" />
      <path d="M2173 124h10l-5 6z" fill={DARK} />
      {labels}
    </RulerSvg>
  );
};

const SideRuler = () => {
  const ticks = [];
  const labels = [];
  for (let i = -20; i <= 145; i++) {
    const y = ZERO_Y + (i * STEP) / 10;
    if (y < 130 || y > 1315) continue;
    const left = i % 10 === 0 ? 53 : i % 5 === 0 ? 61 : 65.5;
    ticks.push(`M${left} ${y.toFixed(1)}H70`);
    if (i % 10 === 0) {
      String((i / 10) * 250)
        .split('')
        .forEach((ch, n) => {
          labels.push(
            <RulerLabel key={`${i}-${n}`} x={59} y={y + 10.5 + n * 9} textAnchor="middle">
              {ch}
            </RulerLabel>
          );
        });
    }
  }
  return (
    <RulerSvg width="18" height="1185" viewBox="52 130 18 1185">
      <path d={ticks.join('')} stroke={DARK} strokeWidth="1" fill="none" />
      <path d="M69.500 130V1315" stroke={DARK} strokeWidth="1.400" />
      <path d="M65 884v10l5-5z" fill={DARK} />
      {labels}
    </RulerSvg>
  );
};

// ---- the figure on the page ----
const sx = X => 1080 + X / 2.53;
const sy = Y => 680 + Y / 3;

const BRACKETS = [
  [316, 593, 92, 224, 224], [240, 392, 224, 299, 299], [500, 686, 224, 276, 276],
  [178, 301, 299, 368, 368], [368, 415, 299, 330, 330], [140, 217, 368, 402, 402],
  [285, 317, 368, 392, 392], [115, 165, 402, 428, 428], [197, 235, 402, 418, 418],
  [270, 303, 392, 408, 408], [100, 125, 428, 448, 448], [150, 178, 428, 440, 440],
  [355, 383, 330, 355, 355], [400, 425, 330, 345, 345], [335, 370, 355, 372, 372],
  [444, 555, 276, 322, 322], [662, 708, 276, 305, 305], [432, 455, 322, 350, 350],
  [520, 590, 322, 345, 345], [498, 540, 345, 368, 368], [570, 605, 345, 368, 368],
  [648, 675, 305, 330, 330], [690, 720, 305, 325, 325], [630, 660, 330, 352, 352],
];

const TIPS = [
  [100, 448, 30], [125, 448, 24], [150, 440, 26], [178, 440, 16], [197, 418, 22], [235, 418, 22],
  [270, 408, 28], [303, 408, 18], [317, 392, 14], [335, 372, 26], [370, 372, 14], [383, 355, 18],
  [400, 345, 24], [425, 345, 14], [444, 350, 26], [455, 350, 26], [485, 368, 26], [510, 368, 18],
  [540, 368, 16], [565, 368, 18], [590, 368, 16], [605, 368, 12], [630, 352, 22], [660, 352, 20],
  [675, 330, 14], [690, 325, 20], [720, 325, 10],
];

const treePath = () => {
  let d = `M${sx(455)} ${sy(48)}V${sy(92)}`;
  BRACKETS.forEach(([l, r, y, yl, yr]) => {
    d += `M${sx(l)} ${sy(yl)}V${sy(y)}H${sx(r)}V${sy(yr)}`;
  });
  return d;
};

const tipPath = () =>
  TIPS.map(([X, Y, h]) => {
    const w = h * 0.55;
    const a = `${sx(X)} ${sy(Y)}`;
    const b = `${sx(Math.max(X - w, 89))} ${sy(Y + h)}`;
    const c = `${sx(X + w)} ${sy(Y + h - 10)}`;
    return `M${a}L${b}L${c}Z`;
  }).join('');

const hash = n => {
  const v = Math.sin(n * 127.1 + 11.7) * 43758.5453;
  return v - Math.floor(v);
};

const envelope = (pts, X) => {
  for (let i = 1; i < pts.length; i++) {
    if (X <= pts[i][0]) {
      const [x0, y0] = pts[i - 1];
      const [x1, y1] = pts[i];
      return y0 + ((y1 - y0) * (X - x0)) / (x1 - x0 || 1);
    }
  }
  return pts[pts.length - 1][1];
};

const histogram = (pts, top, bottom, seed, jitter) => {
  const h = bottom - top;
  let d = `M${sx(89)} ${bottom}`;
  for (let X = 89; X <= 725; X += 1.3) {
    const f = envelope(pts, X) + (hash(X + seed) - 0.5) * jitter;
    const y = bottom - Math.min(Math.max(f, 0.02), 1) * h;
    d += `L${sx(X).toFixed(1)} ${y.toFixed(1)}`;
  }
  return `${d}L${sx(725)} ${bottom}Z`;
};

const ROW_1 = [[89, .6], [150, .74], [222, .72], [228, .98], [236, .74], [300, .78], [400, .66], [430, .88], [500, .72], [600, .8], [606, .98], [612, .74], [672, .6], [676, .35], [680, .62], [725, .58]];
const ROW_2 = [[89, .32], [120, .44], [160, .46], [185, .1], [190, .05], [200, .27], [240, .37], [265, .12], [280, .32], [320, .32], [325, .52], [400, .64], [428, .75], [432, .98], [440, .88], [460, .84], [480, .58], [560, .54], [620, .7], [665, .74], [700, .52], [725, .45]];
const ROW_3 = [[89, .44], [130, .48], [160, .67], [200, .52], [230, .62], [265, .35], [300, .47], [318, .27], [325, .52], [370, .52], [385, .32], [425, .52], [431, .98], [445, .68], [520, .57], [600, .57], [610, .72], [680, .78], [725, .72]];

const TRACK_GAPS = [[268, 2], [279, 3], [378, 2], [580, 3], [606, 3], [700, 11]];
const BIN_BAR = [[89, 268], [272, 278], [282, 378], [380, 580], [583, 606], [609, 701], [711, 725]];
const BIN_LABELS = [1144, 1183, 1203.5, 1263.2, 1309, 1332.8, 1357.3];

const ROW_TOPS = [[894, 921.3], [923, 950.7], [952.3, 980]];
const BAR_COLS = [[1369, 1444], [1446, 1521], [1523.5, 1598.6], [1601, 1675.6]];
const BAR_VALUES = [[.752, .62, .752, .586], [.805, .98, .805, 1], [1, 1, 1, .94]];

const GRAY_LABELS = [
  ['Total reads kept', 1404],
  ['Num SNVs reported', 1482],
  ['Total reads mapped', 1559],
  ['Num INDELs reported', 1636],
];

const NUMBER_LABELS = [
  ['0', 1369], ['4183982', 1431.5], ['0', 1445.5], ['275610', 1509],
  ['0', 1523], ['4183982', 1586], ['0', 1600.5], ['3599', 1663],
];

const ROW_NAMES = [
  ['BGR 130305 mapped sam bam sorted', 914],
  ['BGR 130527 mapped sam bam sorted', 943],
  ['BGR 130708 mapped sam bam sorted', 972],
];

const Figure = () => {
  const gapLines = (top, bottom, fill) =>
    TRACK_GAPS.map(([X, w]) => (
      <rect key={`${top}-${X}`} x={sx(X)} y={top} width={w / 2.53} height={bottom - top} fill={fill} />
    ));
  return (
    <svg width="2298" height="1185" viewBox="70 130 2298 1185" display="block">
      {/* page */}
      <rect x="648" y="289" width="1150" height="874" fill="#666666" />
      <rect x="645.500" y="287.500" width="1150" height="873" fill="#ffffff" stroke="#6a6a6a" strokeWidth="1" />

      <ChartText x="1220" y="321" $size="45" textAnchor="middle">Refining METABAT__44 from "METABAT2"</ChartText>
      <ChartText x="1220" y="367" $size="22.680" textAnchor="middle">Items order: Differential coverage (D: Euclidean; L: Ward) | Current view: mean_coverage | Samples order: custom</ChartText>

      {/* tiny legends */}
      <g fill="none" stroke="#d6d6d6">
        <rect x="1022.500" y="413.500" width="45" height="17.500" />
        <rect x="1022.500" y="442" width="45" height="27" />
      </g>
      <g fill="#bdbdbd">
        <rect x="1024" y="415" width="5" height="2.500" />
        <rect x="1024" y="420" width="9" height="1" />
        <rect x="1049" y="420" width="15" height="1" />
        <rect x="1024" y="422" width="2" height="2" fill="#9a4a30" />
        <rect x="1024" y="425" width="2" height="2" fill="#333333" />
        <rect x="1027" y="422" width="14" height="1.500" />
        <rect x="1027" y="425" width="10" height="1" />
        <rect x="1049" y="422" width="16" height="1.500" />
        <rect x="1049" y="425" width="16" height="1.500" />
        <rect x="1024" y="444" width="7" height="2.500" />
        <rect x="1024" y="447.500" width="38" height="1.500" />
        {[452, 455, 458, 461, 464].map((y, i) => (
          <React.Fragment key={y}>
            <rect x="1024" y={y} width="2" height="2.500" fill={i === 1 ? '#2f7a3f' : '#555555'} />
            <rect x="1027" y={y} width="12" height="1.500" />
            <rect x="1041" y={y} width="8" height="1.500" />
            <rect x="1052" y={y} width="12" height="1.500" />
          </React.Fragment>
        ))}
      </g>

      {/* dendrogram */}
      <path d={treePath()} fill="none" stroke={RUST} strokeWidth="3" />
      <path d={tipPath()} fill={RUST} fillOpacity=".35" stroke={RUST} strokeWidth="2.600" strokeLinejoin="round" />

      {/* parent + length */}
      <rect x={sx(89)} y="841" width="251.500" height="24" fill="#f4e8e5" />
      <rect x={sx(89)} y="851" width="251.500" height="11.500" fill="#e0d6d4" />
      <path d={histogram([[89, .28], [725, .28]], 851, 862.500, 3, .22)} fill="#5f4f4d" />
      {[[445, .9], [560, .7], [612, .8], [690, 1], [505, .5], [575, .5], [625, .5]].map(([X, f]) => (
        <rect key={X} x={sx(X)} y={862.5 - f * 11.5} width="1" height={f * 11.5} fill="#6a5a58" />
      ))}
      {gapLines(841, 865, '#ffffff')}

      {/* gc */}
      <rect x={sx(89)} y="865" width="251.500" height="27" fill="#d6dfd4" />
      <path d={histogram([[89, .92], [725, .9]], 865, 892, 7, .12)} fill="#13500f" />

      {/* coverage tracks */}
      {ROW_TOPS.map(([top, bottom]) => (
        <rect key={top} x={sx(89)} y={top} width="251.500" height={bottom - top} fill="#d3c7c5" />
      ))}
      {ROW_TOPS.map(([top, bottom]) => gapLines(top, bottom, '#e6dedd'))}
      <path d={histogram(ROW_1, 894, 921.3, 21, .17)} fill="#100402" />
      <path d={histogram(ROW_2, 923, 950.7, 37, .2)} fill="#100402" />
      <path d={histogram(ROW_3, 952.3, 980, 53, .17)} fill="#100402" />

      {/* bars */}
      {ROW_TOPS.map(([top, bottom], r) =>
        BAR_COLS.map(([a, b], c) => (
          <React.Fragment key={`${r}-${c}`}>
            <rect x={a} y={top} width={b - a} height={bottom - top} fill="#e8e8e8" />
            <rect x={a} y={top} width={(b - a) * BAR_VALUES[r][c]} height={bottom - top} fill="#919191" />
          </React.Fragment>
        ))
      )}

      {/* bins */}
      {BIN_BAR.map(([a, b]) => (
        <rect key={a} x={sx(a)} y="984" width={(b - a) / 2.53} height="9.700" fill={RUST} />
      ))}

      {/* row names */}
      <ChartText x="1109" y="847" $ui $size="7.200" $fill="#333333" textAnchor="end">Parent</ChartText>
      <ChartText x="1109" y="860.500" $ui $size="11" $fill="#444444" textAnchor="end">Length</ChartText>
      <ChartText x="1109" y="884" $ui $size="18" $fill="#13500f" textAnchor="end">GC-content</ChartText>
      {ROW_NAMES.map(([t, y]) => (
        <ChartText key={t} x="1109" y={y} $ui $size="18" textAnchor="end">{t}</ChartText>
      ))}

      {/* rotated labels */}
      {BIN_LABELS.map(x => (
        <ChartText key={x} transform={`translate(${x} 997) rotate(90) scale(1 1.12)`} $size="17.800" $fill={RUST}>METABAT__44_1</ChartText>
      ))}
      {GRAY_LABELS.map(([t, x]) => (
        <ChartText key={t} transform={`translate(${x} 983) rotate(90)`} $size="18" $fill="#9a9a9a">{t}</ChartText>
      ))}
      {NUMBER_LABELS.map(([t, x], i) => (
        <ChartText key={i} transform={`translate(${x} 983) rotate(90)`} $size="12.300">{t}</ChartText>
      ))}
    </svg>
  );
};

// ---- palette ----
const PALETTE = [
  '#000000', '#1a1a1a', '#333333', '#4d4d4d', '#666666', '#808080', '#999999', '#b3b3b3', '#cccccc', '#e6e6e6', '#ececec', '#f2f2f2', '#f9f9f9', '#ffffff',
  '#800000', '#ff0000', '#808000', '#ffff00', '#008000', '#00ff00', '#008080', '#00ffff', '#000080', '#0000ff', '#800080', '#ff00ff',
  '#2b0000', '#550000', '#800000', '#aa0000', '#d40000', '#ff0000', '#ff2a2a', '#ff5555', '#ff8080', '#ffaaaa', '#ffd5d5',
  '#280b0b', '#501616', '#782121', '#a02c2c', '#c83737', '#d35f5f', '#de8787', '#e9afaf', '#f4d7d7',
  '#241c1c', '#483737', '#6c5353', '#916f6f', '#ac9393', '#c8b7b7', '#e3dbdb',
  '#2b1100', '#552200', '#803300', '#aa4400', '#d45500', '#ff6600', '#ff7f2a', '#ff9955', '#ffb380', '#ffccaa', '#ffe6d5',
  '#28170b', '#502d16', '#784421', '#a05a2c', '#c87137', '#d38d5f', '#deaa87', '#e9c6af', '#f4e3d7',
  '#241f1c', '#483e37', '#6c5d53', '#917c6f', '#ac9d93', '#c8beb7', '#e3dedb',
  '#2b2200', '#554400', '#806600', '#aa8800', '#d4aa00', '#ffcc00', '#ffd42a', '#ffdd55', '#ffe680', '#ffeeaa', '#fff6d5',
  '#28220b', '#504416', '#786721', '#a0892c', '#c8ab37', '#d3bc5f', '#decd87', '#e9ddaf', '#f4eed7',
  '#24221c', '#484537', '#6c6753', '#918a6f', '#aca793', '#c8c4b7', '#e3e2db',
  '#222b00', '#445500', '#668000', '#88aa00', '#aad400', '#ccff00', '#d4ff2a', '#ddff55', '#e5ff80', '#eeffaa', '#f6ffd5',
  '#22280b', '#445016', '#677821', '#89a02c', '#abc837', '#bcd35f', '#cdde87', '#dde9af', '#eef4d7',
  '#22241c',
];

const MENU = ['Datei', 'Bearbeiten', 'Ansicht', 'Ebene', 'Objekt', 'Pfad', 'Text', 'Filter', 'Erweiterungen', 'Hilfe'];

const TOOLS = [
  ['select', 'node'],
  ['rect', 'ellipse', 'star', 'box', 'spiral'],
  ['bezier', 'pencil', 'pen', 'text'],
  ['gradient', 'mesh', 'dropper', 'bucket'],
  ['tweak', 'spray', 'eraser', 'connector'],
  ['zoom', 'measure'],
];

const COMMANDS = [
  ['docNew', 'open', 'save', 'print'],
  ['importDoc', 'exportDoc'],
  ['undo', 'redo'],
  ['copy', 'cut', 'paste'],
  ['dup', 'clone', 'unlink'],
  ['zoomSel', 'zoomDraw'],
  ['fillStroke', 'textDlg', 'layers', 'xml', 'css', 'align'],
  ['docProps', 'prefs'],
];

const SNAPS = [
  [['snap', true]],
  [['snap'], ['snapBBox'], ['snapEdge'], ['snapCorner'], ['snapMid']],
  [['snap', true], ['snapPath'], ['snapX'], ['snapSmooth', true], ['snapMidP'], ['snapCusp']],
  [['snap', true], ['snapObj'], ['snapCenter'], ['snapText']],
  [['snapPage'], ['snapGrid', true], ['snapGuide', true]],
];

const SpinBox = ({ w, value, off, pad = 8, steps = [34, 35], h, mr }) => (
  <Spin $w={w} $off={off} $h={h} $mr={mr}>
    <SpinValue $pad={pad}>{value}</SpinValue>
    <SpinStep $w={steps[0]} $off={off}><Minus size={17} strokeWidth={1.6} /></SpinStep>
    <SpinStep $w={steps[1]} $off={off}><Plus size={17} strokeWidth={1.6} /></SpinStep>
  </Spin>
);

export default function App() {
  return (
    <Window>
      <GlobalStyle />
      <TitleBar>
        Refining_METABAT__44_from__METABAT2_.svg - Inkscape
        <WinButtons>
          <svg width="80" height="36" viewBox="2400 0 80 36">
            <rect x="2400" y="20" width="8" height="2.500" fill={DARK} />
            <rect x="2435.500" y="14.500" width="5" height="6" fill="none" stroke={DARK} strokeWidth="2" />
            <path d="M2468 14l8 9M2476 14l-8 9" stroke="#8a8a8a" strokeWidth="2.400" />
          </svg>
        </WinButtons>
      </TitleBar>
      <MenuBar>
        {MENU.map(m => <MenuItem key={m}>{m}</MenuItem>)}
      </MenuBar>
      <Toolbar>
        {['selAll', 'selLayers', 'deselect', 'touch'].map(n => <Slot key={n}><Icon name={n} /></Slot>)}
        <VRule $l={8} />
        {['rotL', 'rotR', 'flipH', 'flipV'].map(n => <Slot key={n}><Icon name={n} /></Slot>)}
        <VRule />
        {['raiseTop', 'raise', 'lower', 'lowerBot'].map(n => <Slot key={n}><Icon name={n} /></Slot>)}
        <VRule />
        <FieldLabel $w={19} $ml={5} $off>X:</FieldLabel>
        <SpinBox w={186} value="0,000" off mr={8} />
        <FieldLabel $w={15} $off>Y:</FieldLabel>
        <SpinBox w={188} value="0,000" off mr={7} />
        <FieldLabel $w={19} $off>B:</FieldLabel>
        <SpinBox w={181} value="0,000" off />
        <Slot $w={45}><Icon name="lockOpen" size={17} /></Slot>
        <FieldLabel $w={20} $off>H:</FieldLabel>
        <SpinBox w={182} value="0,000" off />
        <UnitButton>px<Caret /></UnitButton>
        <VRule $l={0} $r={7} />
        {['dropA', 'dropB', 'dropC', 'dropD'].map(n => <Slot key={n} $w={36} $on $mr={1}><Icon name={n} /></Slot>)}
      </Toolbar>
      <Workspace>
        <ToolColumn>
          {TOOLS.map((group, g) => (
            <React.Fragment key={g}>
              {g > 0 && <ToolGap />}
              {group.map(n => (
                <ToolButton key={n} $on={n === 'select'}><Icon name={n} /></ToolButton>
              ))}
            </React.Fragment>
          ))}
        </ToolColumn>
        <CanvasGrid>
          <RulerLock><Icon name="lockYellow" size={15} /></RulerLock>
          <Ruler />
          <PageCounter />
          <SideRuler />
          <Canvas><Figure /></Canvas>
          <VScroll><VThumb /></VScroll>
          <div />
          <HScroll><HThumb $w={1468} /></HScroll>
          <WheelButton><Icon name="wheel" /></WheelButton>
        </CanvasGrid>
        <SideColumns>
          <SideColumn>
            {COMMANDS.map((group, g) => (
              <React.Fragment key={g}>
                {g > 0 && <SideGap />}
                {group.map(n => <SideButton key={n}><Icon name={n} /></SideButton>)}
              </React.Fragment>
            ))}
          </SideColumn>
          <SideColumn>
            {SNAPS.map((group, g) => (
              <React.Fragment key={g}>
                {g > 0 && <SideGap />}
                {group.map(([n, on], i) => <SideButton key={i} $on={on}><Icon name={n} /></SideButton>)}
              </React.Fragment>
            ))}
          </SideColumn>
        </SideColumns>
      </Workspace>
      <PaletteArea>
        <PaletteBody>
          <Swatches>
            <NoColor viewBox="0 0 19 19" preserveAspectRatio="none">
              <path d="M0 0l19 19M19 0L0 19" stroke="#7a1f1f" strokeWidth="1.500" />
            </NoColor>
            {PALETTE.map((c, i) => <Swatch key={i} $c={c} />)}
          </Swatches>
          <PaletteScroll><HThumb $w={726} /></PaletteScroll>
        </PaletteBody>
        <PaletteArrow />
      </PaletteArea>
      <StatusBar>
        <StyleReadout>
          <span>Füllung:</span><span>N/V</span>
          <Indented>Kontur:</Indented><span>N/V</span>
        </StyleReadout>
        <FieldLabel $w={19}>O:</FieldLabel>
        <SpinBox w={117} h={36} value="100" off steps={[34, 36]} />
        <VRule $l={3} $r={0} />
        <StatusIconSlot $w={36}><Icon name="eye" size={17} /></StatusIconSlot>
        <StatusIconSlot $w={37}><Icon name="lockPale" size={16} /></StatusIconSlot>
        <LayerButton>(Wurzel)<SmallCaret /></LayerButton>
        <StatusMessage>Keine Objekte ausgewählt. Shift+Klick, Alt+Mausrad über Objekten, oder Rahmen um Objekte ziehen zum Auswählen.</StatusMessage>
        <VRule $l={0} $r={0} />
        <Coords>
          <span>X:</span><span>5280,14</span>
          <span>Y:</span><span>2087,47</span>
        </Coords>
        <FieldLabel $w={25}>Z:</FieldLabel>
        <SpinBox w={105} h={36} value="29%" pad={14} steps={[21, 22]} />
        <FieldLabel $w={27} $ml={10}>D:</FieldLabel>
        <SpinBox w={113} h={36} value="0,00°" pad={19} steps={[21, 22]} />
      </StatusBar>
    </Window>
  );
}
